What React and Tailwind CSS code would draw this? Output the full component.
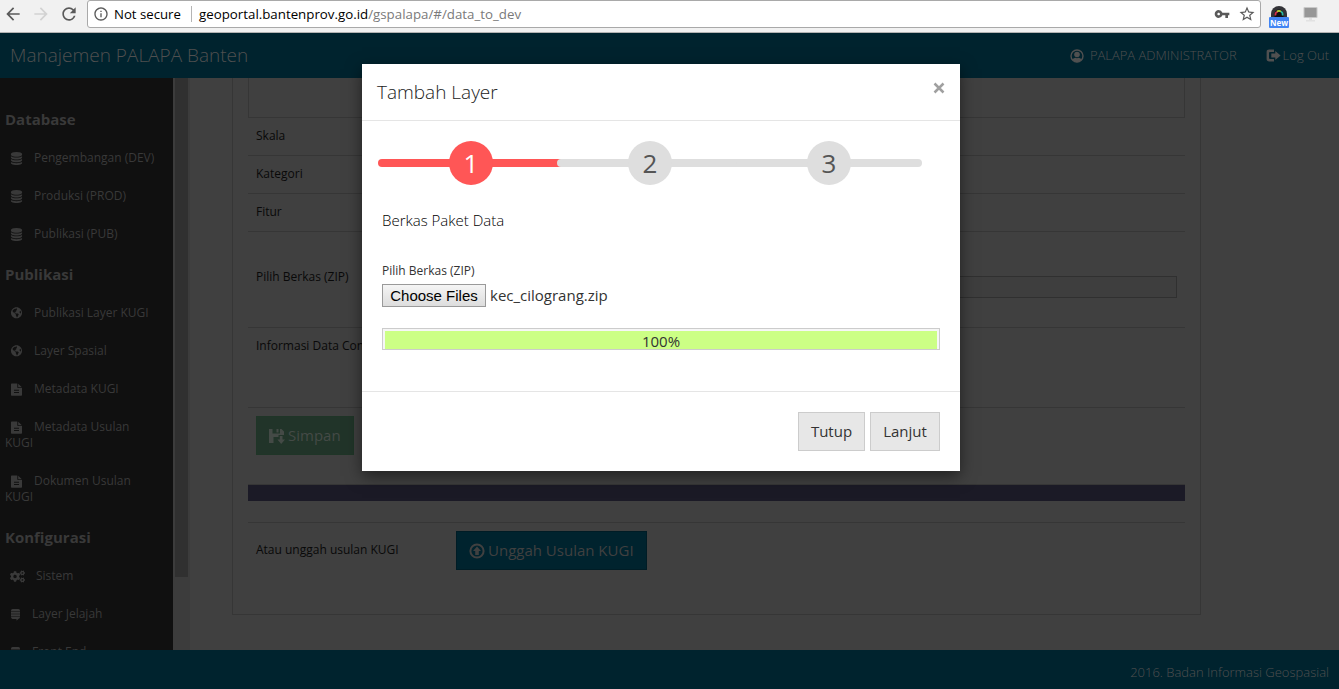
import { FaCogs, FaGlobeAmericas } from "react-icons/fa";
import { MdArrowBack, MdArrowForward, MdRefresh, MdInfoOutline, MdVpnKey, MdStarBorder } from "react-icons/md";

const DISK = "q237 0 443-43t325-127v170q0 69-103 128t-280 93.5-385 34.5-385-34.5-280-93.5-103-128v-170q119 84 325 127t443 43z";

function DatabaseIcon() {
  return (
    <svg viewBox="0 0 1792 1792" className="h-[13px] w-[13px]" fill="currentColor">
      <path d={`M896 768${DISK}M896 1536${DISK}M896 1152${DISK}M896 0q208 0 385 34.5t280 93.5 103 128v128q0 69-103 128t-280 93.5-385 34.5-385-34.5-280-93.5-103-128v-128q0-69 103-128t280-93.5 385-34.5z`} />
    </svg>
  );
}

function FileIcon() {
  return (
    <svg viewBox="0 0 13 13" className="h-[13px] w-[13px]" fill="currentColor" fillRule="evenodd">
      <path d="M1.700 .5H7.300v3.800q0 .7.7.7H12v7q0 .7-.7.7H1.700Q1 12.700 1 12V1.200Q1 .5 1.700.5zM4 6.800v1h5v-1zM4 9v1h5V9zM8.200.8 11.900 4.200H8.200z" />
    </svg>
  );
}

function StackIcon() {
  return (
    <svg viewBox="0 0 11 13" className="h-[13px] w-[11px]" fill="currentColor">
      <path d="M1 2.700Q1 1 2.500 1h6Q10 1 10 2.700V3H1zM1 3.600h9v2.100H1zM1 6.300h9v2.100H1zM1 9h9Q10 10.800 8.300 10.900L6.500 12.700V10.900H2.500Q1 10.800 1 9z" />
    </svg>
  );
}

function GlobeIcon() {
  return <FaGlobeAmericas className="h-[11.5px] w-[13px]" />;
}

function UserIcon() {
  return (
    <svg viewBox="0 0 14 14" className="h-3.5 w-3.5" fill="currentColor">
      <circle cx="7" cy="7" r="6" fill="none" stroke="currentColor" strokeWidth="1.400" />
      <circle cx="7" cy="5.500" r="2.800" />
      <path d="M2.300 10.600Q3.200 9 5.200 8.700q1.800.9 3.600 0 2 .3 2.900 1.900Q9.800 13.200 7 13.200t-4.700-2.600z" />
    </svg>
  );
}

function LogOutIcon() {
  return (
    <svg viewBox="0 0 15 13" className="h-[13px] w-[15px]" fill="currentColor">
      <path d="M8 .6H3.200Q.6.600.6 3v7q0 2.400 2.600 2.400H8v-2.300H4q-1 0-1-1V3.900q0-1 1-1h4z" />
      <path d="M9.300 2 14.600 6.500l-5.300 4.500V8.400H5.300V4.600h4z" />
    </svg>
  );
}

function SaveIcon() {
  return (
    <svg viewBox="0 0 16 16" className="h-4 w-4" fill="currentColor">
      <path d="M0 1h3.500v4.500H11V1h1.500L15 3.500V7h-5.500v2H4.500v6H0zM7.500 1h2v3.500h-2z" />
      <path d="M10.800 8h2.700v3.500H16L12.200 16 8.400 11.500h2.400z" />
    </svg>
  );
}

function UploadIcon() {
  return (
    <svg viewBox="0 0 16 16" className="h-4 w-4" fill="currentColor">
      <path fillRule="evenodd" d="M8 .4a7.600 7.600 0 1 1 0 15.200A7.600 7.600 0 0 1 8 .4zm0 2a5.600 5.600 0 1 0 0 11.200A5.600 5.600 0 0 0 8 2.400z" />
      <path d="M8 3.500 12 8H9.800v4H6.200V8H4z" />
    </svg>
  );
}

function BrowserBar() {
  return (
    <div className="flex h-[33px] shrink-0 items-start border-b border-[#b3b3b3] bg-[#f1f1f1] font-['Open_Sans',sans-serif]">
      <div className="flex h-7 w-[87px] items-center gap-2 pl-[3px] text-[20px]">
        <MdArrowBack className="text-[#5a5a5a]" />
        <MdArrowForward className="text-[#d2d2d2]" />
        <MdRefresh className="text-[#5a5a5a]" />
      </div>
      <div className="flex h-7 w-[1174px] items-center rounded-[3px] border border-[#a9a9a9] bg-white text-[13.300px] text-black">
        <MdInfoOutline className="ml-[5px] text-[16px] text-[#5a5a5a]" />
        <span className="ml-[5px] w-[77px] whitespace-nowrap pt-0.5 text-[13.200px]">Not secure</span>
        <span className="h-4 w-px bg-[#b5b5b5]" />
        <span className="ml-[7px] whitespace-nowrap pt-0.5">
          geoportal.bantenprov.go.id<span className="text-[#7a7a7a]">/gspalapa/#/data_to_dev</span>
        </span>
        <MdVpnKey className="ml-auto text-[16px] text-[#5a5a5a]" />
        <MdStarBorder className="ml-2 mr-1 text-[18px] text-[#5a5a5a]" />
      </div>
      <div className="ml-2 flex w-5 flex-col items-center pt-1.5">
        <svg viewBox="0 0 16 11" className="h-[11px] w-4">
          <path d="M0 11V8a8 8 0 0 1 16 0v3z" fill="#343438" />
          <path d="M3.500 11V8a4.500 4.500 0 0 1 9 0v3z" fill="#111" />
          <path d="M4.500 9.500a3.500 3.500 0 0 1 2.500-4" stroke="#d8304f" strokeWidth="1.700" fill="none" />
          <path d="M6 5.500a3.500 3.500 0 0 1 4 0" stroke="#b5d435" strokeWidth="1.700" fill="none" />
          <path d="M10 5.500a3.500 3.500 0 0 1 1.500 4" stroke="#2bb6a3" strokeWidth="1.700" fill="none" />
        </svg>
        <span className="flex h-[11px] w-5 items-center justify-center rounded-[1px] bg-[#4285f4] text-[8px] font-bold leading-none text-white">New</span>
      </div>
      <svg viewBox="0 0 15 16" className="ml-[14px] mt-1.5 h-4 w-[15px]">
        <rect x=".5" y="1" width="14" height="11" rx="1" fill="#c8c8c8" />
        <rect x="1.500" y="2" width="12" height="9" fill="#979797" />
        <path d="M6 12h3v2h3v1.500H3V14h3z" fill="#e2e2e2" />
      </svg>
    </div>
  );
}

function Heading({ children }) {
  return <h4 className="flex h-[41px] items-center pl-[5px] text-[15px] font-bold">{children}</h4>;
}

function Item({ icon, children }) {
  return (
    <div className="flex h-[38px] items-center pb-0.5 pl-2.5 text-[12px]">
      {icon}
      <span className="ml-[11px] whitespace-nowrap">{children}</span>
    </div>
  );
}

function WrappedItem({ first, second }) {
  return (
    <div className="h-[54px] pt-2.5 text-[12px] leading-4">
      <div className="flex items-center pl-2.5">
        <FileIcon />
        <span className="ml-[11px]">{first}</span>
      </div>
      <div className="pl-[5px]">{second}</div>
    </div>
  );
}

function Sidebar() {
  return (
    <>
      <nav className="h-full w-[173px] shrink-0 overflow-hidden bg-[#101010] pt-[21px] text-[#393939]">
        <Heading>Database</Heading>
        <Item icon={<DatabaseIcon />}>Pengembangan (DEV)</Item>
        <Item icon={<DatabaseIcon />}>Produksi (PROD)</Item>
        <Item icon={<DatabaseIcon />}>Publikasi (PUB)</Item>
        <Heading>Publikasi</Heading>
        <Item icon={<GlobeIcon />}>Publikasi Layer KUGI</Item>
        <Item icon={<GlobeIcon />}>Layer Spasial</Item>
        <Item icon={<FileIcon />}>Metadata KUGI</Item>
        <WrappedItem first="Metadata Usulan" second="KUGI" />
        <WrappedItem first="Dokumen Usulan" second="KUGI" />
        <Heading>Konfigurasi</Heading>
        <Item icon={<FaCogs className="h-[13px] w-[15px]" />}>Sistem</Item>
        <Item icon={<StackIcon />}>Layer Jelajah</Item>
        <Item icon={<StackIcon />}>Front End</Item>
      </nav>
      <div className="h-full w-[17px] shrink-0 bg-[#3c3c3c] pl-0.5">
        <div className="h-[499px] w-[13px] bg-[#303030]" />
      </div>
    </>
  );
}

function Content() {
  return (
    <main className="flex-1 pl-[42px] text-[12px] text-[#090909]">
      <section className="h-[537px] w-[969px] border-x border-b border-[#363636] px-[15px]">
        <div className="h-10 border-x border-b border-[#363636]" />
        <div className="flex h-[38px] items-center border-b border-[#363636] pb-0.5 pl-2">Skala</div>
        <div className="flex h-[38px] items-center border-b border-[#363636] pb-0.5 pl-2">Kategori</div>
        <div className="flex h-[38px] items-center border-b border-[#363636] pb-0.5 pl-2">Fitur</div>
        <div className="flex h-24 items-start border-b border-[#363636] px-2 pt-9">
          <span className="w-[200px]">Pilih Berkas (ZIP)</span>
          <div className="mt-2 h-[22px] flex-1 border border-[#303030] bg-[#3e3e3e]" />
        </div>
        <div className="h-20 border-b border-[#363636] pl-2 pt-[9px]">Informasi Data Contoh</div>
        <div className="h-[77px] border-b border-[#363636] pl-2 pt-2">
          <div className="flex h-[39px] w-[98px] items-center gap-[3px] border border-[#1f3527] bg-[#213429] pl-3 text-[15px] text-[#444a46]">
            <SaveIcon />
            <span>Simpan</span>
          </div>
        </div>
        <div className="h-4 bg-[#1b1a26]" />
        <div className="h-[22px] border-b border-[#363636]" />
        <div className="flex items-start pl-2 pt-2">
          <span className="w-[200px] pt-2.5">Atau unggah usulan KUGI</span>
          <div className="flex h-[39px] w-[191px] items-center gap-[3px] border border-[#001c25] bg-[#00232e] pl-3 text-[15px] text-[#404040]">
            <UploadIcon />
            <span className="whitespace-nowrap">Unggah Usulan KUGI</span>
          </div>
        </div>
      </section>
    </main>
  );
}

function Step({ number, active }) {
  return (
    <div className={"flex h-2 w-[186px] shrink-0 items-center justify-center rounded-full " + (active ? "bg-[#ff5656]" : "-ml-[7px] bg-[#dedede]")}>
      <span className={"flex h-11 w-11 shrink-0 items-center justify-center rounded-full text-[26px] " + (active ? "bg-[#ff5656] text-white" : "bg-[#dedede] text-[#555]")}>
        {number}
      </span>
    </div>
  );
}

function Dialog() {
  return (
    <div className="absolute left-[362px] top-16 flex h-[407px] w-[598px] flex-col bg-white text-[#222] shadow-[0_5px_15px_rgba(0,0,0,0.5)]">
      <header className="flex h-[57px] items-center justify-between border-b border-[#e5e5e5] px-[15px]">
        <h3 className="text-[19px] font-light">Tambah Layer</h3>
        <svg viewBox="0 0 12 12" className="mb-2 h-3 w-3" stroke="#a0a0a0" strokeWidth="2.500">
          <path d="M1.500 1.500 10.500 10.500M10.500 1.500 1.500 10.500" />
        </svg>
      </header>
      <div className="h-[270px] px-5">
        <div className="-ml-1 flex h-[84px] items-center">
          <Step number="1" active />
          <Step number="2" />
          <Step number="3" />
        </div>
        <p className="mt-1 text-[15px] font-light leading-[22px] text-black">Berkas Paket Data</p>
        <p className="mt-[31px] text-[12px] leading-[18px] text-[#333]">Pilih Berkas (ZIP)</p>
        <div className="mt-1 flex h-[23px] items-center">
          <button className="h-[23px] w-[104px] border border-[#9a9a9a] bg-linear-to-b from-[#f5f5f5] to-[#dddddd] font-['Liberation_Sans',sans-serif] text-[15px] leading-none text-black">Choose Files</button>
          <span className="ml-1 text-[15px] text-[#333]">kec_cilograng.zip</span>
        </div>
        <div className="mt-[21px] h-[22px] border border-[#ccc] bg-[#f6f6f6] px-0.5 pt-0.5">
          <div className="h-[18px] bg-[#ccff85] text-center text-[15px] leading-[21px] text-[#333]">100%</div>
        </div>
      </div>
      <footer className="flex h-20 items-start justify-end gap-[5px] border-t border-[#e5e5e5] pr-5 pt-5 text-[15px] text-[#333]">
        <button className="h-[39px] w-[67px] border border-[#ccc] bg-[#e7e7e7]">Tutup</button>
        <button className="h-[39px] w-[70px] border border-[#ccc] bg-[#e7e7e7]">Lanjut</button>
      </footer>
    </div>
  );
}

export default function App() {
  return (
    <div className="relative flex h-[689px] w-[1339px] flex-col overflow-hidden bg-[#404040] font-['Open_Sans',sans-serif]">
      <BrowserBar />
      <header className="flex h-[45px] shrink-0 items-center bg-[#00232e] pl-2.5 pr-2.5 text-[13px] font-light text-[#505050]">
        <h1 className="text-[19px]">Manajemen PALAPA Banten</h1>
        <div className="ml-auto flex items-center gap-1.5 whitespace-nowrap">
          <UserIcon />
          <span>PALAPA ADMINISTRATOR</span>
        </div>
        <div className="ml-[29px] flex items-center gap-0.5 whitespace-nowrap">
          <LogOutIcon />
          <span>Log Out</span>
        </div>
      </header>
      <div className="flex h-[572px] shrink-0 overflow-hidden">
        <Sidebar />
        <Content />
      </div>
      <footer className="flex h-[39px] shrink-0 items-center justify-end bg-[#00232e] pr-2.5 pt-1.5 text-[13px] font-light text-[#505050]">
        2016. Badan Informasi Geospasial
      </footer>
      <Dialog />
    </div>
  );
}
